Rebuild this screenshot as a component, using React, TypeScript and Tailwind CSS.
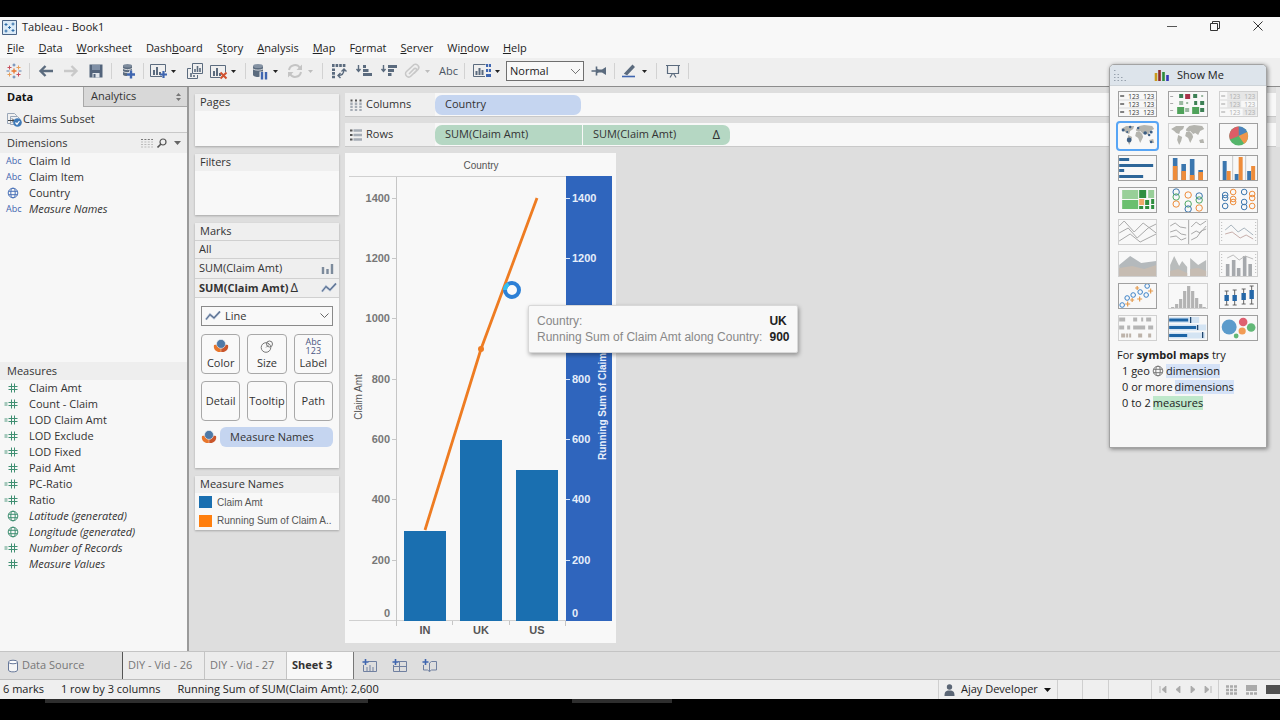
import type { ReactNode } from "react";

const MENUS: [string, string, string][] = [
  ["", "F", "ile"],
  ["", "D", "ata"],
  ["", "W", "orksheet"],
  ["Dash", "b", "oard"],
  ["S", "t", "ory"],
  ["", "A", "nalysis"],
  ["", "M", "ap"],
  ["F", "o", "rmat"],
  ["", "S", "erver"],
  ["Wi", "n", "dow"],
  ["", "H", "elp"],
];

const SLATE = "#5b6b7e";
const NAVY = "#3f66b0";

function Tool({ label, narrow, children }: { label: string; narrow?: boolean; children: ReactNode }) {
  return (
    <button
      type="button"
      aria-label={label}
      className={`flex h-6 shrink-0 items-center justify-center ${narrow ? "w-[22px]" : "w-[25px]"}`}
    >
      {children}
    </button>
  );
}

function Caret({ label, dim }: { label: string; dim?: boolean }) {
  return (
    <button type="button" aria-label={label} className="flex h-6 w-[13px] shrink-0 items-center pl-[2px]">
      <svg width="5" height="3" viewBox="0 0 5 3">
        <path d="M0 0h5L2.500 3z" fill={dim ? "#bdbdbd" : "#222"} />
      </svg>
    </button>
  );
}

function Sep() {
  return (
    <div className="flex w-[7px] shrink-0 justify-center">
      <div className="h-4 w-px bg-[#d2d2d2]" />
    </div>
  );
}

function Svg({ w = 16, h = 16, children }: { w?: number; h?: number; children: ReactNode }) {
  return (
    <svg width={w} height={h} viewBox={`0 0 ${w} ${h}`} fill="none" className="shrink-0">
      {children}
    </svg>
  );
}

function Globe({ color, size = 12 }: { color: string; size?: number }) {
  return (
    <svg width={size} height={size} viewBox="0 0 12 12" fill="none" stroke={color} className="shrink-0">
      <circle cx="6" cy="6" r="4.800" />
      <ellipse cx="6" cy="6" rx="2.200" ry="4.800" />
      <path d="M1.500 4.300h9M1.500 7.700h9" />
    </svg>
  );
}

function Hash({ calc }: { calc?: boolean }) {
  return (
    <Svg w={16} h={12}>
      <path d="M7.500 1.500v9M10.500 1.500v9M4.500 4.500h9M4.500 7.500h9" stroke="#3f8f72" />
      {calc && <path d="M0.500 5h3M0.500 7h3" stroke="#3f8f72" strokeWidth="0.9" />}
    </Svg>
  );
}

function LineIcon() {
  return (
    <Svg w={16} h={12}>
      <path d="M1 9.500L5 4.500L9 8L15 1.500" stroke="#b9c6da" strokeWidth="2.400" />
      <path d="M1 9.500L5 4.500L9 8L15 1.500" stroke="#5a7090" strokeWidth="1.200" />
    </Svg>
  );
}

function ColorIcon() {
  return (
    <Svg w={16} h={14}>
      <path d="M1 6C0 10 3 13.500 7.800 13L7.800 9L4 5.500z" fill="#e8762c" />
      <path d="M15 6C16 10 13 13.500 8.200 13L8.200 9L12 5.500z" fill="#c9562c" />
      <circle cx="8" cy="4.900" r="4.500" fill="#4e79a7" stroke="#f7f7f7" strokeWidth="0.6" />
    </Svg>
  );
}

function Toolbar() {
  return (
    <div className="flex h-7 shrink-0 items-center bg-[#efefef] pb-[2px] pl-px">
      <Tool label="Start page">
        <Svg>
          <path d="M8 5.500v5M5.500 8h5" stroke="#e8762c" strokeWidth="1.300" />
          <path d="M3.500 2.500v4M1.500 4.500h4M12.500 9.500v4M10.500 11.500h4" stroke="#c94f5c" />
          <path d="M12.500 2.500v4M10.500 4.500h4M3.500 9.500v4M1.500 11.500h4" stroke="#e8a15c" />
          <path d="M8 0.500v3M6.500 2h3M8 12.500v3M6.500 14h3M0.500 8h3M12.500 8h3" stroke="#5b7fae" />
        </Svg>
      </Tool>
      <Sep />
      <Tool label="Back">
        <Svg><path d="M15 8H2.500M7.500 3L2.500 8l5 5" stroke={SLATE} strokeWidth="2.400" /></Svg>
      </Tool>
      <Tool label="Forward">
        <Svg><path d="M1 8h12.500M8.500 3l5 5l-5 5" stroke="#c9c9c9" strokeWidth="2.400" /></Svg>
      </Tool>
      <Tool label="Save">
        <Svg w={14} h={14}>
          <path d="M0.500 0.500h13v13h-13z" fill="#53647b" />
          <path d="M3 1h8v5H3z" fill="#8090a6" />
          <path d="M3.500 9h7v4.500h-7z" fill="#dfe4ea" />
          <path d="M4.500 10h2v3.500h-2z" fill="#53647b" />
        </Svg>
      </Tool>
      <Sep />
      <Tool label="New data source">
        <Svg>
          <path d="M3 2.500v9c0 2 9 2 9 0v-9z" fill={SLATE} />
          <ellipse cx="7.500" cy="2.800" rx="4.500" ry="1.800" fill="#7d8b9c" />
          <path d="M3 5.500c2 1.500 7 1.500 9 0M3 8.500c2 1.500 7 1.500 9 0" stroke="#efefef" strokeWidth="0.8" />
          <path d="M11 7.500v8M7 11.500h8" stroke="#efefef" strokeWidth="4" />
          <path d="M11 7.500v8M7 11.500h8" stroke={NAVY} strokeWidth="2.400" />
        </Svg>
      </Tool>
      <Sep />
      <Tool label="New worksheet" narrow>
        <Svg w={19} h={16}>
          <path d="M13 13.500H1.500v-12h15V9" stroke={SLATE} />
          <path d="M5 12V7M8 12V4M11 12V9" stroke={SLATE} strokeWidth="2" />
          <path d="M14.500 8v7M11 11.500h7" stroke={NAVY} strokeWidth="2.200" />
        </Svg>
      </Tool>
      <Caret label="New worksheet options" />
      <Tool label="Duplicate">
        <Svg w={18} h={18}>
          <path d="M6.500 1.500h10v10h-10z" stroke={SLATE} />
          <path d="M5 6.500H1.500v10h10V13" stroke={SLATE} />
          <path d="M9 10V7M11.500 10V4M14 10V6M5 15v-4M8 15v-2" stroke={SLATE} strokeWidth="1.600" />
        </Svg>
      </Tool>
      <Tool label="Clear sheet" narrow>
        <Svg w={19} h={17}>
          <path d="M11 14.500H1.500v-12h15V9" stroke={SLATE} />
          <path d="M5 13V8M8 13V5M11 13v-3" stroke={SLATE} strokeWidth="2" />
          <path d="M11.500 9.500l6 6M17.500 9.500l-6 6" stroke="#d0512f" strokeWidth="2" />
        </Svg>
      </Tool>
      <Caret label="Clear options" />
      <Sep />
      <Tool label="Pause auto updates" narrow>
        <Svg w={18} h={17}>
          <path d="M2 3v9c0 2.500 10 2.500 10 0V3z" fill={SLATE} />
          <ellipse cx="7" cy="3" rx="5" ry="2" fill="#8492a3" />
          <path d="M2 6c2 1.500 8 1.500 10 0" stroke="#efefef" strokeWidth="0.8" />
          <path d="M8.500 8.500h8v8.500h-8z" fill="#efefef" />
          <path d="M11 9v7.500M15 9v7.500" stroke={NAVY} strokeWidth="2.400" />
        </Svg>
      </Tool>
      <Caret label="Auto update options" />
      <Tool label="Run update" narrow>
        <Svg>
          <path d="M2 7a6 6 0 0 1 11-2M14 9a6 6 0 0 1-11 2" stroke="#c4c4c4" strokeWidth="2" />
          <path d="M15 1.500V7H9.500zM1 14.500V9h5.500z" fill="#c4c4c4" />
        </Svg>
      </Tool>
      <Caret label="Run update options" dim />
      <Sep />
      <Tool label="Swap rows and columns">
        <Svg>
          <path d="M1 2.500h13.500" stroke={SLATE} strokeWidth="3" strokeDasharray="2.600 1" />
          <path d="M2.500 5.500v10" stroke={SLATE} strokeWidth="3" strokeDasharray="2.600 1" />
          <path d="M13 6.500c0 4-2 6-6 6M10.500 8.500L13 6L15.500 8.500M9.500 10L7 12.500L9.500 15" stroke={SLATE} strokeWidth="1.400" />
        </Svg>
      </Tool>
      <Tool label="Sort ascending">
        <Svg w={18} h={16}>
          <path d="M3.500 2v6M1.500 6l2 2.500l2-2.500" stroke={SLATE} strokeWidth="1.400" />
          <path d="M8 3.500h3M8 7.500h5.500M8 11.500h9" stroke={SLATE} strokeWidth="3" />
        </Svg>
      </Tool>
      <Tool label="Sort descending">
        <Svg w={18} h={16}>
          <path d="M3.500 2v6M1.500 6l2 2.500l2-2.500" stroke={SLATE} strokeWidth="1.400" />
          <path d="M8 3.500h9M8 7.500h6M8 11.500h3.500" stroke={SLATE} strokeWidth="3" />
        </Svg>
      </Tool>
      <Tool label="Group members" narrow>
        <Svg>
          <path d="M5 11l5.500-5.500a1.500 1.500 0 0 1 2 2L7 13a3 3 0 0 1-4.500-4.500L9 2.500a3 3 0 0 1 5 4L10 10.500" stroke="#c8c8c8" strokeWidth="1.600" />
        </Svg>
      </Tool>
      <Caret label="Group options" dim />
      <Tool label="Show mark labels"><span className="text-[11px] text-[#4a5563]">Abc</span></Tool>
      <Sep />
      <div className="w-[3px] shrink-0" />
      <Tool label="Show or hide cards" narrow>
        <Svg w={20} h={16}>
          <path d="M13 13.500H1.500v-12h12" stroke={SLATE} />
          <path d="M4.500 12V8M7.500 12V5M10.500 12V7" stroke={SLATE} strokeWidth="2" />
          <path d="M14 1h5v3h-5zM14 6h5v3h-5zM14 11h5v3h-5z" fill={NAVY} />
          <path d="M16.500 6v3M16.500 1v3" stroke="#efefef" strokeWidth="0.8" />
        </Svg>
      </Tool>
      <Caret label="Card options" />
      <select
        aria-label="Fit"
        className="h-5 w-[78px] shrink-0 appearance-none rounded-none border border-[#6f6f6f] bg-[#f8f8f8] px-[3px] text-[11px] leading-4 text-[#222] [background-image:linear-gradient(45deg,transparent_45%,#777_45%,#777_55%,transparent_55%),linear-gradient(-45deg,transparent_45%,#777_45%,#777_55%,transparent_55%)] bg-[length:5px_5px] bg-[position:right_7px_center,right_3px_center] bg-no-repeat"
      >
        <option>Normal</option>
      </select>
      <div className="w-[2px]" />
      <Tool label="Fix axes">
        <Svg>
          <path d="M0.500 8H5M5.500 3.500v9" stroke={SLATE} strokeWidth="1.600" />
          <path d="M5 5.500l3 1h3l4-2.500v8l-4-2.500H8l-3 1z" fill={SLATE} />
        </Svg>
      </Tool>
      <Sep />
      <Tool label="Highlight" narrow>
        <Svg>
          <path d="M4 10.500L11.500 2.500L13 4L6 11.500z" fill={SLATE} stroke={SLATE} strokeWidth="1.400" />
          <path d="M1 13.500h13" stroke={NAVY} strokeWidth="1.600" />
        </Svg>
      </Tool>
      <Caret label="Highlight options" />
      <Sep />
      <Tool label="Presentation mode">
        <Svg>
          <path d="M1 2.500h14M2.500 3v7.500h11V3M7.500 10.500L5 14.500M8.500 10.500l2.500 4" stroke={SLATE} strokeWidth="1.200" />
        </Svg>
      </Tool>
      <Sep />
    </div>
  );
}

type Field = { name: string; kind: "abc" | "geo" | "num" | "calc"; italic?: boolean };

const DIMENSIONS: Field[] = [
  { name: "Claim Id", kind: "abc" },
  { name: "Claim Item", kind: "abc" },
  { name: "Country", kind: "geo" },
  { name: "Measure Names", kind: "abc", italic: true },
];

const MEASURES: Field[] = [
  { name: "Claim Amt", kind: "num" },
  { name: "Count - Claim", kind: "calc" },
  { name: "LOD Claim Amt", kind: "calc" },
  { name: "LOD Exclude", kind: "calc" },
  { name: "LOD Fixed", kind: "calc" },
  { name: "Paid Amt", kind: "num" },
  { name: "PC-Ratio", kind: "calc" },
  { name: "Ratio", kind: "calc" },
  { name: "Latitude (generated)", kind: "geo", italic: true },
  { name: "Longitude (generated)", kind: "geo", italic: true },
  { name: "Number of Records", kind: "calc", italic: true },
  { name: "Measure Values", kind: "num", italic: true },
];

function FieldList({ fields, geo }: { fields: Field[]; geo: string }) {
  return (
    <ul>
      {fields.map((f) => (
        <li key={f.name} className="flex h-4 items-center">
          <span className="flex w-[29px] shrink-0 items-center pl-1">
            {f.kind === "abc" && <span className="pl-[2px] text-[9px] text-[#3f66b0]">Abc</span>}
            {f.kind === "geo" && <span className="pl-[3px]"><Globe color={geo} /></span>}
            {f.kind === "num" && <Hash />}
            {f.kind === "calc" && <Hash calc />}
          </span>
          <span className={f.italic ? "italic" : ""}>{f.name}</span>
        </li>
      ))}
    </ul>
  );
}

function DataPane() {
  return (
    <aside className="flex w-[189px] shrink-0 flex-col border-r-2 border-[#9a9a9a] bg-[#f7f7f7]">
      <div className="flex h-5 shrink-0">
        <button type="button" className="w-[83px] bg-[#f1f1f1] pl-[7px] text-left font-bold text-[#111]">Data</button>
        <button type="button" className="flex flex-1 items-center justify-between border-b border-l border-[#a9a9a9] bg-[#d8d8d8] pr-[6px] pl-[7px]">
          Analytics
          <Svg w={5} h={8}><path d="M0 3h5L2.500 0zM0 5h5L2.500 8z" fill="#777" /></Svg>
        </button>
      </div>
      <div className="flex h-[26px] shrink-0 items-center gap-px border-b border-[#c8c8c8] bg-[#f1f1f1] pl-[6px]">
        <Svg w={16} h={15}>
          <path d="M1.500 1.500h7l2 2v8h-9z" stroke="#9aa7b8" />
          <path d="M4.500 4.500h7l2 2v6h-9z" stroke="#9aa7b8" fill="#eef1f5" />
          <path d="M2 8.500h6M6 6.500l2 2l-2 2" stroke="#444" />
          <circle cx="11.500" cy="10.500" r="4.300" fill="#3f7ab8" />
          <path d="M9.500 10.500l1.500 1.700l2.500-3.200" stroke="#fff" strokeWidth="1.200" />
        </Svg>
        Claims Subset
      </div>
      <div className="flex h-5 shrink-0 items-center justify-between bg-[#eeeeee] pr-[6px] pl-[7px]">
        <h2>Dimensions</h2>
        <div className="flex items-center gap-1">
          <Svg w={13} h={10}>
            <path d="M1 1.500h12" stroke="#777" strokeDasharray="2 1.400" />
            <path d="M1 4h12M1 6.500h12M1 9h12" stroke="#bbb" strokeDasharray="2 1.400" />
          </Svg>
          <Svg w={10} h={10}>
            <circle cx="6" cy="4" r="3" stroke="#555" strokeWidth="1.200" />
            <path d="M4 6L0.500 9.500" stroke="#555" strokeWidth="1.600" />
          </Svg>
          <div className="pl-[3px]"><Svg w={7} h={4}><path d="M0 0h7L3.500 4z" fill="#666" /></Svg></div>
        </div>
      </div>
      <div className="min-h-0 flex-[209]"><FieldList fields={DIMENSIONS} geo="#4a72b8" /></div>
      <h2 className="flex h-[18px] shrink-0 items-center bg-[#eeeeee] pl-[7px]">Measures</h2>
      <div className="min-h-0 flex-[271]"><FieldList fields={MEASURES} geo="#3f8f72" /></div>
    </aside>
  );
}

function Card({ title, className, children }: { title: string; className: string; children?: ReactNode }) {
  return (
    <section className={`shrink-0 bg-[#f8f8f8] shadow-[0_1px_2px_rgba(0,0,0,0.25)] ${className}`}>
      <h2 className="flex h-[17px] items-center bg-[#efefef] pl-[5px]">{title}</h2>
      {children}
    </section>
  );
}

function MarkButton({ label, icon }: { label: string; icon?: ReactNode }) {
  return (
    <button type="button" className="flex h-10 flex-col items-center justify-center rounded-[4px] border border-[#a8a8a8] bg-[#f9f9f9]">
      {icon && <span className="flex h-[18px] items-center">{icon}</span>}
      <span className="leading-4">{label}</span>
    </button>
  );
}

function Cards() {
  return (
    <div className="flex w-[156px] shrink-0 flex-col gap-2 px-[6px] pt-[7px]">
      <Card title="Pages" className="h-[52px]" />
      <Card title="Filters" className="h-[61px]" />
      <Card title="Marks" className="h-[245px]">
        <div className="flex h-[18px] items-center border-t border-[#d0d0d0] bg-[#efefef] pl-1">All</div>
        <div className="flex h-5 items-center justify-between border-t border-[#d0d0d0] bg-[#efefef] pr-[5px] pl-1">
          SUM(Claim Amt)
          <Svg w={13} h={10}><path d="M2 10V3M6.500 10V5M11 10V0" stroke="#7d8b9c" strokeWidth="2.400" /></Svg>
        </div>
        <div className="flex h-5 items-center justify-between border-y border-[#d0d0d0] bg-[#efefef] pr-[2px] pl-1">
          <span className="flex items-center gap-[2px]"><b>SUM(Claim Amt)</b><span className="text-[13px]">Δ</span></span>
          <LineIcon />
        </div>
        <div className="px-[6px] pt-2">
          <div className="relative flex items-center">
            <select aria-label="Mark type" className="h-5 w-full appearance-none rounded-none border border-[#8a8a8a] bg-[#f9f9f9] pl-[23px]">
              <option>Line</option>
            </select>
            <span className="pointer-events-none absolute left-1"><LineIcon /></span>
            <span className="pointer-events-none absolute right-1"><Svg w={9} h={6}><path d="M0.500 0.500l4 4l4-4" stroke="#666" /></Svg></span>
          </div>
          <div className="mt-2 grid grid-cols-3 gap-[7px]">
            <MarkButton label="Color" icon={<ColorIcon />} />
            <MarkButton
              label="Size"
              icon={
                <Svg w={14} h={13}>
                  <circle cx="6" cy="7.500" r="4.800" stroke="#777" />
                  <circle cx="9.500" cy="4" r="3" stroke="#777" />
                  <path d="M6 7.500L9.500 4" stroke="#777" strokeWidth="0.8" />
                </Svg>
              }
            />
            <MarkButton
              label="Label"
              icon={<span className="flex flex-col text-[9px] leading-[9px] text-[#4a5580]"><span>Abc</span><span>123</span></span>}
            />
            <MarkButton label="Detail" />
            <MarkButton label="Tooltip" />
            <MarkButton label="Path" />
          </div>
          <div className="mt-[6px] flex items-center gap-[3px]">
            <ColorIcon />
            <div className="flex h-5 flex-1 items-center rounded-[6px] bg-[#c5d5f0] pl-[10px]">Measure Names</div>
          </div>
        </div>
      </Card>
      <Card title="Measure Names" className="h-[54px]">
        <ul className="pl-1 font-['Liberation_Sans',Arial,sans-serif] text-[10px] whitespace-nowrap text-[#555]">
          <li className="flex h-[18px] items-center gap-[5px]"><span className="h-3 w-[13px] shrink-0 bg-[#1a6fb0]" />Claim Amt</li>
          <li className="flex h-[19px] items-center gap-[5px]"><span className="h-3 w-[13px] shrink-0 bg-[#ff7f0e]" />Running Sum of Claim A..</li>
        </ul>
      </Card>
    </div>
  );
}

const LEFT_TICKS = [0, 200, 400, 600, 800, 1000, 1200, 1400];
const RIGHT_TICKS = [0, 200, 400, 600, 800, 1200, 1400];
const BARS = [
  { name: "IN", x: 59, value: 300 },
  { name: "UK", x: 115, value: 600 },
  { name: "US", x: 171, value: 500 },
];
const yOf = (v: number) => 468 - Math.round(v * 0.3015);

function Chart() {
  return (
    <div className="relative w-[271px] bg-[#f8f8f8]">
      <svg width="271" height="490" viewBox="0 0 271 490" className="block font-['Liberation_Sans',Arial,sans-serif] text-[11px]">
        <text x="136" y="16" textAnchor="middle" fontSize="10" fill="#555">Country</text>
        <path d="M4 23.500h262M4 467.500h262" stroke="#d0d0d0" />
        <path d="M51.500 24v449M107.500 468v4M164.500 468v4M220.500 468v5" stroke="#c6c6c6" />
        <rect x="221" y="23" width="46" height="445" fill="#2f65bd" />
        {LEFT_TICKS.map((t) => (
          <g key={t}>
            {t > 0 && <path d={`M47 ${yOf(t) - 0.5}h4`} stroke="#c6c6c6" />}
            <text x="45" y={t ? yOf(t) + 3 : 464} textAnchor="end" fontWeight="bold" fill="#777">{t}</text>
          </g>
        ))}
        {RIGHT_TICKS.map((t) => (
          <g key={t}>
            {t > 0 && <path d={`M221 ${yOf(t) - 0.5}h4`} stroke="#dbe6f7" />}
            <text x="227" y={t ? yOf(t) + 3 : 464} fontWeight="bold" fill="#e6eefa">{t}</text>
          </g>
        ))}
        {BARS.map((b) => (
          <g key={b.name}>
            <rect x={b.x} y={yOf(b.value)} width="42" height={468 - yOf(b.value)} fill="#1a6fb0" />
            <text x={b.x + 21} y="481" textAnchor="middle" fontWeight="bold" fill="#555">{b.name}</text>
          </g>
        ))}
        <path d="M80 377L136 196L192 45" stroke="#ee7c22" strokeWidth="2.800" fill="none" />
        <circle cx="136" cy="196" r="3" fill="#ee7c22" />
        <text transform="translate(17 244) rotate(-90)" textAnchor="middle" fontSize="10" fill="#555">Claim Amt</text>
        <text transform="translate(261 307) rotate(-90)" fontSize="10" fontWeight="bold" fill="#e6eefa">Running Sum of Claim</text>
        <circle cx="167" cy="137" r="7" fill="#fafafa" stroke="#2d80d6" strokeWidth="4" />
        <path d="M160 137a7 7 0 0 1 3.500-6" stroke="#35c0ee" strokeWidth="4" fill="none" />
      </svg>
      <div
        role="tooltip"
        className="absolute top-[152px] left-[183px] grid grid-cols-[auto_auto] gap-x-[7px] rounded-[2px] border border-[#d8d8d8] bg-[#f8f8f8] px-2 py-[7px] font-['Liberation_Sans',Arial,sans-serif] text-[12px] leading-4 whitespace-nowrap text-[#888] shadow-[1px_2px_4px_rgba(0,0,0,0.35)]"
      >
        <span>Country:</span><b className="text-[#222]">UK</b>
        <span>Running Sum of Claim Amt along Country:</span><b className="text-[#222]">900</b>
      </div>
    </div>
  );
}

function Shelf({ title, icon, children }: { title: string; icon: ReactNode; children: ReactNode }) {
  return (
    <div className="flex h-6 shrink-0 items-center border-b border-[#c9c9c9] bg-[#f8f8f8]">
      <div className="flex h-full w-[90px] items-center gap-1 bg-[#efefef] pl-[5px]">{icon}{title}</div>
      {children}
    </div>
  );
}

function Viz() {
  return (
    <main className="flex min-w-0 flex-1 flex-col">
      <div className="flex shrink-0 flex-col gap-[6px] border-r-4 border-[#e6e6e6] pt-[6px]">
        <Shelf
          title="Columns"
          icon={
            <Svg w={12} h={12}>
              <path d="M1.500 3.500v9M6 3.500v9M10.500 3.500v9" stroke="#a5acb5" strokeWidth="2.400" strokeDasharray="2.400 0.800" />
              <path d="M0.500 1.500h2M5 1.500h2M9.500 1.500h2" stroke="#555" strokeWidth="2" />
            </Svg>
          }
        >
          <div className="flex h-5 w-[146px] items-center rounded-[7px] bg-[#c5d5f0] pl-[10px]">Country</div>
        </Shelf>
        <Shelf
          title="Rows"
          icon={
            <Svg w={12} h={12}>
              <path d="M3.500 1.500h9M3.500 6h9M3.500 10.500h9" stroke="#a5acb5" strokeWidth="2.400" />
              <path d="M0 1.500h2.500M0 6h2.500M0 10.500h2.500" stroke="#555" strokeWidth="2" />
            </Svg>
          }
        >
          <div className="flex gap-px">
            <div className="flex h-5 w-[147px] items-center rounded-l-[7px] bg-[#b5d7c3] pl-[10px]">SUM(Claim Amt)</div>
            <div className="flex h-5 w-[147px] items-center justify-between rounded-r-[7px] bg-[#b5d7c3] pr-[10px] pl-[10px]">
              SUM(Claim Amt)<span className="text-[13px]">Δ</span>
            </div>
          </div>
        </Shelf>
      </div>
      <div className="flex min-h-0 flex-1 items-start pt-[6px]"><Chart /></div>
    </main>
  );
}

function Table123({ dim }: { dim?: boolean }) {
  const c = dim ? "#b0b0b0" : "#333";
  return (
    <>
      {dim && <path d="M8 1h30v7H8zM8 9.500h14v7H8zM23.500 17.500h14v7h-14z" fill="#e6e6e6" />}
      {[5, 13, 21].map((y) => (
        <g key={y}>
          <path d={`M2 ${y}h4`} stroke={c} strokeWidth="1.200" />
          <text x="10" y={y + 2.5} fontSize="6.500" fill={c}>123</text>
          <text x="25" y={y + 2.5} fontSize="6.500" fill={c}>123</text>
        </g>
      ))}
      <path d="M1 9h37M1 17h37" stroke="#ccc" strokeWidth="0.7" />
    </>
  );
}

function WorldMap({ dots }: { dots?: boolean }) {
  return (
    <>
      <path d="M3 6l5-3l8 0l-1 3l-3 2l-1 3l-3-1l-2-2zM10 12l4 2l-1 4l-2 4l-2-5zM18 9l3-1l3 3l1 3l-3 6l-2-5l-3-2zM18 6l3-3l5-1l8 1l2 3l-4 2l-2 4l-3-2l-2 1l-3-3l-4 0zM31 17l4-1l1 4l-4 0z" fill="#b4b4ae" />
      {dots && (
        <g fill="#3d5e83">
          <circle cx="5" cy="7" r="1.500" /><circle cx="12" cy="4" r="1.200" /><circle cx="11" cy="17" r="2.400" />
          <circle cx="27" cy="10" r="1.800" /><circle cx="33" cy="9" r="1.500" /><circle cx="33" cy="19" r="1.300" />
          <circle cx="20" cy="5" r="1.200" /><circle cx="31" cy="12" r="1.200" /><circle cx="9" cy="9" r="1" />
        </g>
      )}
    </>
  );
}

const rings = (points: [number, number, string][], r: number) =>
  points.map(([x, y, c]) => <circle key={`${x}-${y}`} cx={x} cy={y} r={r} stroke={c} fill="none" />);

const B = "#3b76ae";
const O = "#ee8c3a";
const G = "#4fa863";

const THUMBS: { name: string; dim?: boolean; selected?: boolean; art: ReactNode }[] = [
  { name: "Text table", art: <Table123 /> },
  {
    name: "Heat map",
    art: (
      <>
        <path d="M2 5.500h3M2 12.500h3M2 19.500h3" stroke="#aaa" />
        <path d="M11 3h4v4h-4zM25 3h4v4h-4zM26 10h3v4h-3zM32 10h4v4h-4zM32 17h4v4h-4z" fill="#3d8055" />
        <path d="M9 16h7v7H9zM24 16h7v7h-7z" fill="#4fa25a" />
        <path d="M17 3h5v5h-5z" fill="#a8324a" />
        <path d="M11 10h4v4h-4zM18 11h2v2h-2zM33 4h2v2h-2zM17 17h4v4h-4z" fill="#9ab8a0" />
      </>
    ),
  },
  { name: "Highlight table", dim: true, art: <Table123 dim /> },
  { name: "Symbol map", selected: true, art: <WorldMap dots /> },
  { name: "Filled map", dim: true, art: <WorldMap /> },
  {
    name: "Pie chart",
    art: (
      <>
        <circle cx="19.500" cy="13" r="9.500" fill="#55b56a" />
        <path d="M19.500 13V3.500A9.500 9.500 0 0 1 28 9z" fill="#4c84bd" />
        <path d="M19.500 13L28 9A9.500 9.500 0 0 1 25 20.800z" fill="#f0954c" />
        <path d="M19.500 13V3.500A9.500 9.500 0 0 0 10.800 16.500z" fill="#dd5c66" />
      </>
    ),
  },
  { name: "Horizontal bars", art: <path d="M1 4.500h10M1 10.500h34M1 15.500h5M1 21.500h24" stroke="#2d6699" strokeWidth="3" /> },
  {
    name: "Stacked bars",
    art: (
      <>
        <path d="M7 25V3M15.500 25V9M24 25V4M32.500 25V15" stroke={B} strokeWidth="4.600" />
        <path d="M7 25V11M15.500 25V16M24 25V20M32.500 25V17" stroke={O} strokeWidth="4.600" />
      </>
    ),
  },
  {
    name: "Side-by-side bars",
    art: (
      <>
        <path d="M5.500 25V6M17.500 25V19M30 25V16" stroke={B} strokeWidth="4" />
        <path d="M9.500 25V16M21.500 25V2M34 25V11" stroke={O} strokeWidth="4" />
        <path d="M13.500 1v24M26.500 1v24" stroke="#bbb" strokeWidth="0.8" />
      </>
    ),
  },
  {
    name: "Treemap",
    art: (
      <>
        <path d="M4 3h16v9H4zM30 3h6v8h-6z" fill="#98cf98" />
        <path d="M4 13h16v9H4z" fill="#6abf6e" />
        <path d="M21 3h7v8h-7zM27 13h4v5h-4zM33 12h3v5h-3zM21 19h4v3h-4zM27 19h4v3h-4zM33 18h3v4h-3z" fill="#2f8f3f" />
        <path d="M21 12h5v6h-5z" fill="#f0a868" />
      </>
    ),
  },
  {
    name: "Circle views",
    art: rings([[8, 5, B], [8, 10, G], [8, 17, O], [20, 8, O], [20, 17, G], [20, 22, B], [31, 9, B], [31, 13, G], [31, 21, O]], 3.2),
  },
  {
    name: "Side-by-side circles",
    art: rings([[6, 8, B], [6, 11, B], [6, 19, B], [14, 5, O], [14, 12, O], [14, 15, O], [25, 5, B], [25, 15, B], [25, 20, B], [33, 7, O], [33, 11, O], [33, 19, O]], 2.8),
  },
  { name: "Continuous lines", dim: true, art: <path d="M1 7L6 2L16 13L25 4L38 14M1 14L10 9L19 19L30 9L38 5M1 22L12 15L22 23L38 15" stroke="#a9a9a9" fill="none" /> },
  { name: "Discrete lines", dim: true, art: <path d="M2 7l5-3l5 4l6 1M2 13l6-2l5 4l5 1M2 18l6-1l5 4l5-2M23 8l5-5l4 3l6-4M23 15l5-3l4 2l6-7M23 21l6-3l4-6l5-2M20.500 1v24" stroke="#a9a9a9" fill="none" /> },
  {
    name: "Dual lines",
    dim: true,
    art: (
      <>
        <path d="M2.500 3v20M36.500 3v20" stroke="#bbb" strokeDasharray="1 2" />
        <path d="M6 11l6-5l7 7l6-4l9 7" stroke="#a8b4bd" fill="none" />
        <path d="M6 15l7-2l8 6l6-3l7 4" stroke="#c7aeaa" fill="none" />
      </>
    ),
  },
  {
    name: "Continuous area",
    dim: true,
    art: (
      <>
        <path d="M1 14L12 5L23 12L38 10V25H1z" fill="#b4b9bc" />
        <path d="M1 17L14 15L26 18L38 14V25H1z" fill="#c6bcb2" />
      </>
    ),
  },
  {
    name: "Discrete area",
    dim: true,
    art: (
      <>
        <path d="M2 25V14l4-9l5 10l3-5l5 6v9zM22 7l8 7l8-5v16H22z" fill="#b9bcbc" />
        <path d="M2 20l8-2l9 4v3H2zM22 18l8-1l8 3v5H22z" fill="#c6bcb2" />
      </>
    ),
  },
  {
    name: "Dual combination",
    dim: true,
    art: (
      <>
        <path d="M8.500 25V13M14.500 25V9M19.500 25V17M25.500 25V5M31 25V13" stroke="#a6a9ad" strokeWidth="3.600" />
        <path d="M8 7l6-3l6 5l6-4l8 3" stroke="#bbb" fill="none" />
        <path d="M2.500 3v20M36.500 3v20" stroke="#bbb" strokeDasharray="1 2" />
      </>
    ),
  },
  {
    name: "Scatter plot",
    art: (
      <>
        {rings([[4, 22, "#3c82c8"], [9, 15, "#3c82c8"], [15, 12, "#3c82c8"], [22, 9, "#3c82c8"], [28, 12, "#3c82c8"], [29, 3, "#3c82c8"]], 2.3)}
        <path d="M17 5h4M19 3v4M7 21h5M9.500 18.500v5M12 17h4M14 15v4M19 16h5M21.500 13.500v5M30 8h5M32.500 5.500v5" stroke="#e39a4e" strokeWidth="1.200" />
      </>
    ),
  },
  { name: "Histogram", dim: true, art: <path d="M4.500 25v-1M8.500 25v-4M12.500 25V16M16.500 25V8M20.500 25V3M24.500 25V8M28.500 25V15M32.500 25v-4M36 25v-1" stroke="#b3b3b3" strokeWidth="3.200" /> },
  {
    name: "Box-and-whisker plot",
    art: (
      <>
        <path d="M7.500 8v14M15.500 7v15M24.500 6v15M32.500 3v18M5.500 8h4M5.500 22h4M13.500 7h4M13.500 22h4M22.500 6h4M22.500 21h4M30.500 3h4M30.500 21h4" stroke="#555" strokeWidth="0.9" />
        <path d="M7.500 12v6M15.500 12v6M24.500 10v7M32.500 7v9" stroke="#2467a8" strokeWidth="4.400" />
      </>
    ),
  },
  {
    name: "Gantt",
    dim: true,
    art: (
      <>
        <path d="M1 4.500h6M15 4.500h4M23 4.500h2M28 4.500h5M1 12.500h5M9 12.500h3M15 12.500h12M30 12.500h5" stroke="#b5b5b5" strokeWidth="4" />
        <path d="M3 20.500h4M8 20.500h2M11 20.500h2M20 20.500h4M30 20.500h3" stroke="#bdb3aa" strokeWidth="4" />
      </>
    ),
  },
  {
    name: "Bullet graph",
    art: (
      <>
        <path d="M1 5h30M1 12.500h37M1 20.500h36" stroke="#d4e4f3" strokeWidth="6" />
        <path d="M1 5h19M1 12.500h27M1 20.500h18" stroke="#1d65a6" strokeWidth="3" />
        <path d="M22.500 2v6M29.500 10v5M34.500 17v6" stroke="#163d66" strokeWidth="1.200" />
      </>
    ),
  },
  {
    name: "Packed bubbles",
    art: (
      <>
        <circle cx="10" cy="12" r="7.500" fill="#5b9bcb" /><circle cx="24" cy="7" r="4.300" fill="#df6070" />
        <circle cx="23" cy="16" r="3.600" fill="#f29c55" /><circle cx="32" cy="12.500" r="4.300" fill="#62b877" />
        <circle cx="17" cy="21" r="2.400" fill="#62b877" />
      </>
    ),
  },
];

function ShowMe() {
  return (
    <section className="absolute top-[47px] right-[13px] flex h-[384px] w-[158px] flex-col rounded-t-[5px] border border-[#a3a3a3] bg-[#f7f7f7] text-[#222] shadow-[1px_1px_4px_rgba(0,0,0,0.45)]">
      <header className="flex h-[21px] shrink-0 items-center rounded-t-[4px] border-b border-[#cdd3d8] bg-[#dde4eb] pl-1">
        <Svg w={14} h={14}>
          <path d="M0 2.500h3M0 6.500h7M0 9.500h10M0 12.500h14" stroke="#98a3ae" strokeDasharray="1.500 2" />
        </Svg>
        <h2 className="flex flex-1 items-center justify-center gap-[7px] pr-4">
          <Svg w={16} h={12}>
            <path d="M2 12V4" stroke="#c99a1c" strokeWidth="2.600" />
            <path d="M5.500 12V1" stroke="#8c2a2a" strokeWidth="2.600" />
            <path d="M9.500 12V3" stroke="#2e8a3c" strokeWidth="2.600" />
            <path d="M13.500 12V6" stroke="#3538b8" strokeWidth="2.600" />
          </Svg>
          Show Me
        </h2>
      </header>
      <div className="grid grid-cols-3 gap-x-[11px] gap-y-[6px] px-2 pt-[5px]">
        {THUMBS.map((t) => (
          <button
            key={t.name}
            type="button"
            aria-label={t.name}
            className={`h-[26px] bg-[#f8f8f8] ${
              t.selected
                ? "rounded-[2px] outline-2 outline-[#57a5f5]"
                : t.dim
                  ? "outline -outline-offset-1 outline-[#d0d0d0]"
                  : "outline -outline-offset-1 outline-[#a0a0a0]"
            }`}
          >
            <svg viewBox="0 0 39 26" className="block h-full w-full">{t.art}</svg>
          </button>
        ))}
      </div>
      <div className="pt-[6px] pl-[7px]">
        <p className="leading-4">For <b>symbol maps</b> try</p>
        <ul className="pl-[5px]">
          <li className="flex h-4 items-center gap-[2px]">1 geo <Globe color="#777" /> <span className="bg-[#d5e2f7] leading-[14px]">dimension</span></li>
          <li className="flex h-4 items-center gap-[2px]">0 or more <span className="bg-[#d5e2f7] leading-[14px]">dimensions</span></li>
          <li className="flex h-4 items-center gap-[2px]">0 to 2 <span className="bg-[#bfe8cb] leading-[14px]">measures</span></li>
        </ul>
      </div>
    </section>
  );
}

function SheetTabs() {
  return (
    <nav className="flex h-7 shrink-0 items-stretch border-t border-[#c4c4c4] bg-[#dedede] text-[#777]">
      <button type="button" className="flex w-[123px] items-center gap-[3px] border-r border-[#555] pl-[7px]">
        <Svg w={12} h={14}>
          <path d="M1.500 3v8c0 2.500 9 2.500 9 0V3" stroke="#667799" fill="#f5f5f5" />
          <ellipse cx="6" cy="3" rx="4.500" ry="1.800" stroke="#667799" fill="#fff" />
        </Svg>
        Data Source
      </button>
      <button type="button" className="w-[82px] border-r border-[#c4c4c4] bg-[#ececec] pl-[5px] text-left">DIY - Vid - 26</button>
      <button type="button" className="w-[82px] border-r border-[#c4c4c4] bg-[#ececec] pl-[5px] text-left">DIY - Vid - 27</button>
      <button type="button" className="w-[67px] border-r border-[#777] bg-[#f8f8f8] pl-[5px] text-left font-bold text-[#333]">Sheet 3</button>
      <div className="flex items-center">
        <button type="button" aria-label="New worksheet" className="flex w-[30px] justify-center">
          <Svg w={15} h={13}>
            <path d="M6 2.500h8.500v10h-13V6M5 12V8M8 12V6M11 12V8" stroke="#7080a0" />
            <path d="M3.500 0v6M0.500 3h6" stroke={NAVY} strokeWidth="1.600" />
          </Svg>
        </button>
        <button type="button" aria-label="New dashboard" className="flex w-[30px] justify-center">
          <Svg w={15} h={13}>
            <path d="M6 2.500h8.500v10h-13V6M7.500 2v10M1 7.500h13" stroke="#7080a0" />
            <path d="M3.500 0v6M0.500 3h6" stroke={NAVY} strokeWidth="1.600" />
          </Svg>
        </button>
        <button type="button" aria-label="New story" className="flex w-[30px] justify-center">
          <Svg w={15} h={13}>
            <path d="M1.500 6v5h4l2 1.500l2-1.500h5V2.500H9.500L7.500 4v8.500" stroke="#7080a0" />
            <path d="M3.500 0v6M0.500 3h6" stroke={NAVY} strokeWidth="1.600" />
          </Svg>
        </button>
      </div>
    </nav>
  );
}

const NAV: [string, string][] = [
  ["First sheet", "M1 0v7M7 0L3 3.500L7 7z"],
  ["Previous sheet", "M6 0L2 3.500L6 7z"],
  ["Next sheet", "M2 0l4 3.500L2 7z"],
  ["Last sheet", "M7 0v7M1 0l4 3.500L1 7z"],
];

function StatusBar() {
  return (
    <footer className="flex h-5 shrink-0 items-stretch border-t border-[#bdbdbd] bg-[#efefef] text-[#222]">
      <div className="flex flex-1 items-center gap-[17px] pl-[3px]">
        <span>6 marks</span>
        <span>1 row by 3 columns</span>
        <span>Running Sum of SUM(Claim Amt): 2,600</span>
      </div>
      <button type="button" className="flex w-[120px] items-center gap-[6px] border-x border-[#cfcfcf] pl-[5px]">
        <Svg w={11} h={12}>
          <circle cx="5.500" cy="3" r="2.700" fill="#5b6675" />
          <path d="M0.500 12c0-4 1-5.500 5-5.500s5 1.500 5 5.500z" fill="#5b6675" />
        </Svg>
        Ajay Developer
        <Svg w={7} h={4}><path d="M0 0h7L3.500 4z" fill="#111" /></Svg>
      </button>
      <div className="w-[25px] border-r border-[#cfcfcf]" />
      <div className="w-[26px] border-r border-[#cfcfcf]" />
      <div className="w-[43px] border-r border-[#cfcfcf]" />
      <div className="flex w-[67px] items-center justify-center border-r border-[#cfcfcf]">
        {NAV.map(([label, d]) => (
          <button key={label} type="button" aria-label={label} className="flex w-[15px] justify-center">
            <Svg w={8} h={7}><path d={d} stroke="#aaa" fill="#aaa" strokeWidth="0.8" /></Svg>
          </button>
        ))}
      </div>
      <div className="flex w-[61px] items-center justify-between pl-[7px]">
        <Svg w={11} h={10}><path d="M0 1.500h11M0 5h11M0 8.500h11" stroke="#aaa" strokeWidth="2.400" strokeDasharray="3 1" /></Svg>
        <Svg w={11} h={10}>
          <path d="M0 0h11v6H0z" fill="#aaa" />
          <path d="M0 8.500h11" stroke="#aaa" strokeWidth="2.400" strokeDasharray="3 1" />
        </Svg>
        <div className="h-[9px] w-[14px] bg-[#505050]" />
      </div>
    </footer>
  );
}

export default function App() {
  return (
    <div className="flex h-screen flex-col overflow-hidden bg-black pt-[17px] font-['Open_Sans','Noto_Sans',sans-serif] text-[11px] text-[#333]">
      <div className="relative flex min-h-0 flex-1 flex-col bg-[#f8f8f8]">
        <header className="flex h-[21px] shrink-0 items-center">
          <div className="flex flex-1 items-center gap-[5px] pl-[2px] text-[#222]">
            <Svg w={15} h={15}>
              <path d="M0.500 0.500h14v14h-14z" fill="#dcebf7" stroke="#4a6486" />
              <path d="M7.500 6v3M6 7.500h3M4 3v3M2.500 4.500h3M11 2.500v3M9.500 4h3M4 9.500v3M2.500 11h3M11 9v3M9.500 10.500h3" stroke="#2f6da8" />
            </Svg>
            <h1>Tableau - Book1</h1>
          </div>
          <div className="flex items-center pr-px pb-1">
            <button type="button" aria-label="Minimize" className="flex h-4 w-[43px] items-center justify-center">
              <Svg w={10} h={10}><path d="M0 5.500h10" stroke="#555" /></Svg>
            </button>
            <button type="button" aria-label="Restore" className="flex h-4 w-[43px] items-center justify-center">
              <Svg w={10} h={10}><path d="M0.500 2.500h7v7h-7zM2.500 2.500v-2h7v7h-2" stroke="#333" /></Svg>
            </button>
            <button type="button" aria-label="Close" className="flex h-4 w-[43px] items-center justify-center">
              <Svg w={10} h={10}><path d="M0.500 0.500l9 9M9.500 0.500l-9 9" stroke="#333" /></Svg>
            </button>
          </div>
        </header>
        <nav className="flex h-5 shrink-0 items-center gap-[14px] pl-[7px] text-[#222]">
          {MENUS.map(([a, u, b]) => (
            <button key={a + u + b} type="button">{a}<span className="underline">{u}</span>{b}</button>
          ))}
        </nav>
        <Toolbar />
        <div className="flex min-h-0 flex-1 border-t border-[#8c8c8c] bg-[#dedede]">
          <DataPane />
          <Cards />
          <Viz />
        </div>
        <SheetTabs />
        <StatusBar />
        <ShowMe />
      </div>
      <div className="flex h-[21px] shrink-0 items-start">
        <div className="ml-[45px] h-1 w-[323px] bg-[#2e2e2e]" />
        <div className="ml-[204px] h-1 w-[100px] bg-[#2e2e2e]" />
      </div>
    </div>
  );
}
